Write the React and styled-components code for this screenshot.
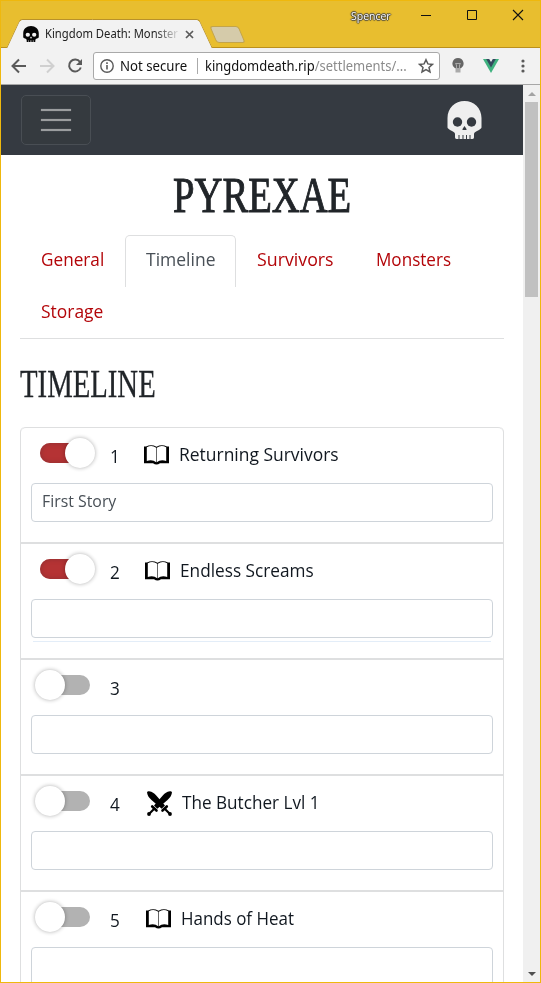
import React, { useLayoutEffect, useRef, useState } from "react";
import styled, { createGlobalStyle, css } from "styled-components";

const Global = createGlobalStyle`
  * { box-sizing: border-box; }
  body { margin: 0; overflow: hidden; font-family: "Open Sans", "Noto Sans", sans-serif; }
  svg { display: block; flex: none; }
`;

/* ---------- text set to a fixed width ---------- */
const FitBox = styled.span`
  display: block;
  flex: none;
  width: ${(p) => p.$w}px;
  white-space: nowrap;
`;
const FitInner = styled.span`
  display: inline-block;
  transform-origin: 0 50%;
`;
function Fit({ w, children }) {
  const ref = useRef(null);
  const [scale, setScale] = useState(1);
  useLayoutEffect(() => {
    setScale(w / ref.current.offsetWidth);
  }, [w, children]);
  return (
    <FitBox $w={w}>
      <FitInner ref={ref} style={{ transform: `scaleX(${scale})` }}>{children}</FitInner>
    </FitBox>
  );
}

/* ---------- window chrome ---------- */
const Window = styled.div`
  display: flex;
  flex-direction: column;
  width: 541px;
  height: 983px;
  overflow: hidden;
  border: 1px solid #efb80d;
  background: #fff;
`;
const TitleBar = styled.header`
  display: flex;
  flex: none;
  height: 47px;
  padding-left: 12px;
  background: #e8be2f;
  border-bottom: 1px solid #bb901c;
`;
const BrowserTab = styled.div`
  position: relative;
  display: flex;
  align-items: center;
  width: 193px;
  height: 29px;
  margin-top: 18px;
  padding: 0 0 0 10px;
  font-family: "Noto Sans", sans-serif;
  font-size: 12px;
  color: #222;
  > * { z-index: 1; }
  &::before, &::after {
    content: "";
    position: absolute;
    top: 0;
    bottom: 0;
    width: 55%;
    background: #f2f2f2;
    border-top: 1px solid #b8912a;
    z-index: 0;
  }
  &::before { left: 0; transform: skewX(-25deg); border-left: 1px solid #b8912a; border-top-left-radius: 3px; }
  &::after { right: 0; transform: skewX(25deg); border-right: 1px solid #b8912a; border-top-right-radius: 3px; }
`;
const TabTitle = styled.div`
  width: 134px;
  margin-left: 6px;
  mask-image: linear-gradient(90deg, #000 110px, transparent 136px);
`;
const NewTab = styled.div`
  width: 29px;
  height: 17px;
  margin: 25px 0 0 7px;
  transform: skewX(23deg);
  background: #d5cbaa;
  border: 1px solid #c3a44b;
  border-radius: 3px;
`;
const Account = styled.div`
  margin: 7px 0 0 109px;
  font-size: 11px;
  line-height: 16px;
  color: #fff;
  text-shadow: 0 0 1px #333, 1px 0 1px #444, -1px 0 1px #444, 0 1px 1px #444, 0 -1px 1px #444;
`;
const WindowButtons = styled.div`
  display: flex;
  gap: 34px;
  margin: 8px 0 0 29px;
`;
const Toolbar = styled.div`
  display: flex;
  align-items: center;
  flex: none;
  height: 37px;
  padding: 0 0 1px 10px;
  background: #f2f2f2;
  border-bottom: 1px solid #a7a7a7;
`;
const AddressBar = styled.div`
  display: flex;
  align-items: center;
  width: 347px;
  height: 28px;
  margin-left: 10px;
  padding-left: 6px;
  background: #fff;
  border: 1px solid #a9a9a9;
  border-radius: 3px;
  font-family: "Noto Sans", sans-serif;
  font-size: 14px;
  color: #111;
`;
const Secure = styled.div`
  margin: 0 10px 0 6px;
`;
const Url = styled.div`
  padding-left: 7px;
  margin-right: 11px;
  border-left: 1px solid #aaa;
  line-height: 16px;
  height: 16px;
`;
const UrlPath = styled.span`
  color: #8b8b8b;
`;
const ToolIcons = styled.div`
  display: flex;
  align-items: center;
  gap: ${(p) => p.$gap}px;
  margin-left: ${(p) => p.$left || 0}px;
`;

/* ---------- page ---------- */
const Viewport = styled.div`
  display: flex;
  flex: 1;
  min-height: 0;
`;
const Page = styled.main`
  width: 522px;
  overflow: hidden;
`;
const Navbar = styled.nav`
  display: flex;
  justify-content: space-between;
  align-items: center;
  height: 70px;
  padding: 0 41px 0 20px;
  background: #353a41;
`;
const Toggler = styled.button`
  display: flex;
  flex-direction: column;
  justify-content: center;
  align-items: center;
  gap: 8px;
  width: 70px;
  height: 50px;
  padding: 0;
  background: #353a3f;
  border: 1px solid #494e54;
  border-radius: 5px;
`;
const Bar = styled.i`
  width: 30px;
  height: 2px;
  background: #9b9d9f;
  box-shadow: 0 0 1px #9b9d9f;
`;
const Content = styled.div`
  padding: 0 19px;
`;
const heading = css`
  margin: 0;
  font-family: "Liberation Serif", serif;
  font-weight: 400;
  color: #212529;
`;
const Title = styled.h1`
  ${heading}
  display: flex;
  justify-content: center;
  height: 80px;
  font-size: 51px;
  line-height: 80px;
  -webkit-text-stroke: 1px #212529;
`;
const Section = styled.h2`
  ${heading}
  height: 88px;
  font-size: 41px;
  line-height: 89px;
  -webkit-text-stroke: 0.3px #212529;
`;
const Tabs = styled.div`
  display: flex;
  flex-wrap: wrap;
  height: 104px;
  border-bottom: 1px solid #dedfe0;
`;
const Tab = styled.div`
  height: 52px;
  padding: 0 20px;
  font-size: 18px;
  line-height: 47px;
  color: #b30509;
  border: 1px solid transparent;
  border-bottom: 0;
  border-radius: 5px 5px 0 0;
  ${(p) => p.$active && css`
    color: #495057;
    border-color: #dedfe0;
  `}
`;
const List = styled.div`
  border: solid #dedfe0;
  border-width: 0 1px;
  border-radius: 5px 5px 0 0;
`;
const Item = styled.section`
  height: 116px;
  padding: 0 10px;
  border: solid #dedfe0;
  border-width: 1px 0;
  &:first-child { border-radius: 5px 5px 0 0; }
`;
const Head = styled.div`
  display: flex;
  align-items: center;
  height: 55px;
  padding: 0 0 3px 4px;
  font-size: 18px;
  line-height: 52px;
  color: #111820;
`;
const Switch = styled.div`
  display: flex;
  align-items: center;
  justify-content: ${(p) => (p.$on ? "flex-end" : "flex-start")};
  width: 50px;
  height: 20px;
  margin: 0 20px 2px 5px;
  border-radius: 10px;
  background: ${(p) => (p.$on ? "#b53334" : "#b2b2b2")};
  box-shadow: ${(p) => (p.$on ? "inset 0 0 5px #8c3032" : "none")};
`;
const Knob = styled.div`
  flex: none;
  width: 30px;
  height: 30px;
  margin: 0 -5px;
  border-radius: 50%;
  background: #fff;
  box-shadow: 0 0 4px rgba(0, 0, 0, 0.32);
`;
const Year = styled.div`
  width: ${(p) => p.$w}px;
  padding-top: 4px;
`;
const IconSlot = styled.div`
  width: 25px;
  margin-right: ${(p) => p.$gap}px;
  padding-top: 2px;
`;
const Note = styled.div`
  height: 39px;
  padding-left: 10px;
  border: 1px solid #ced4da;
  border-radius: 4px;
  font-size: 16.5px;
  line-height: 34px;
  color: #495057;
`;
const NoteShade = styled.div`
  height: 1px;
  margin: 3px 2px 0;
  background: #e3edf8;
`;

/* ---------- scrollbar ---------- */
const Scrollbar = styled.div`
  display: flex;
  flex-direction: column;
  align-items: center;
  width: 17px;
  padding: 7px 0 6px;
  background: #f0f0f0;
`;
const Thumb = styled.div`
  width: 13px;
  height: 195px;
  margin: 6px 0 auto;
  background: #c1c1c1;
`;

/* ---------- icons ---------- */
const Skull = ({ w, h, fill, hole }) => (
  <svg width={w} height={h} viewBox="0 0 35 38" preserveAspectRatio="none">
    <path fill={fill} d="M17.500 0C27 0 34.500 7 34.500 17v9.500c0 1-2 2-4 3.300-2 1.200-3.500 2-3.500 3.200v3c0 1.300-.5 2-1.500 2h-16C8.500 38 8 37.300 8 36v-3c0-1.200-1.500-2-3.500-3.200-2-1.300-4-2.300-4-3.300V17C.5 7 8 0 17.500 0z" />
    <g fill={hole}>
      <circle cx="10.500" cy="21" r="4.700" />
      <circle cx="24.500" cy="21" r="4.700" />
      <path d="M17.500 25l2 3v1h-4v-1zM11.500 34h1v4h-1zM15.500 34h1v4h-1zM19 34h1v4h-1zM22.500 34h1v4h-1z" />
    </g>
  </svg>
);
const Book = () => (
  <svg width="25" height="20" viewBox="0 0 25 20">
    <path fillRule="evenodd" d="M0 1.500H2Q7.500-1 12.500 1.800Q17.500-1 23 1.500H25V18.200H16Q12.500 21 9 18.200H0zM2.800 2.200V16Q8.500 14.300 12.200 17.200V2.800Q8-.3 2.800 2.200zM22.200 2.200Q17-.3 12.800 2.800V17.200Q16.500 14.300 22.200 16z" />
  </svg>
);
const Sword = () => (
  <g>
    <path d="M0 1.500Q.5 0 2 .3C5.500 1 7 2 9 4.200L18 14.500l-3.300 3.200L4.500 9C2 6.500.6 5 0 1.500z" />
    <path d="M15.500 19.500L19.800 15.500" stroke="#000" strokeWidth="2.600" strokeLinecap="round" />
    <path d="M17 17l6 6" stroke="#000" strokeWidth="2.200" />
    <circle cx="23" cy="23" r="1.900" />
  </g>
);
const Swords = () => (
  <svg width="25" height="25" viewBox="0 0 25 25">
    <Sword />
    <g transform="translate(25 0) scale(-1 1)"><Sword /></g>
  </svg>
);
const Line = ({ w = 16, h = 16, d, color = "#5a5a5a", sw = 2 }) => (
  <svg width={w} height={h} viewBox={`0 0 ${w} ${h}`} fill="none" stroke={color} strokeWidth={sw}>
    <path d={d} />
  </svg>
);
const CloseTab = styled.div`
  margin: 1px 0 0 6px;
`;
const MenuDots = styled.svg`
  margin-left: 3px;
  fill: #5a5a5a;
`;

const tabs = [["General", 63], ["Timeline", 69], ["Survivors", 77], ["Monsters", 75], ["Storage", 62]];
const years = [
  { n: 1, on: true, yw: 34, icon: "book", gap: 9.5, name: "Returning Survivors", w: 160, note: "First Story" },
  { n: 2, on: true, yw: 35, icon: "book", gap: 10, name: "Endless Screams", w: 134, shade: true },
  { n: 3, yw: 36 },
  { n: 4, yw: 37, icon: "swords", gap: 10, name: "The Butcher Lvl 1", w: 138 },
  { n: 5, yw: 36, icon: "book", gap: 9.5, name: "Hands of Heat", w: 113 },
];

export default function App() {
  return (
    <Window>
      <Global />
      <TitleBar>
        <BrowserTab>
          <Skull w={16} h={16} fill="#050505" hole="#f2f2f2" />
          <TabTitle><Fit w={133}>Kingdom Death: Monster</Fit></TabTitle>
          <CloseTab><Line w={9} h={9} d="M1 1l7 7M8 1l-7 7" sw={1.7} /></CloseTab>
        </BrowserTab>
        <NewTab />
        <Account><Fit w={40}>Spencer</Fit></Account>
        <WindowButtons>
          <Line w={12} h={12} d="M1 6.500h10" color="#111" sw={1} />
          <Line w={12} h={12} d="M1.500 1.500h9v9h-9z" color="#111" sw={1} />
          <Line w={12} h={12} d="M1 1l10 10M11 1L1 11" color="#111" sw={1.1} />
        </WindowButtons>
      </TitleBar>
      <Toolbar>
        <ToolIcons $gap={12}>
          <Line d="M15 8H2M8 1.500L1.500 8L8 14.500" />
          <Line d="M1 8h13M8 1.500L14.500 8L8 14.500" color="#d0d0d0" />
          <svg width="16" height="16" viewBox="0 0 16 16" fill="none" stroke="#5a5a5a" strokeWidth="2">
            <path d="M13 4A6 6 0 1 0 13.800 9.500" />
            <path d="M15 1v6H9z" fill="#5a5a5a" stroke="none" />
          </svg>
        </ToolIcons>
        <AddressBar>
          <svg width="14" height="14" viewBox="0 0 14 14" fill="none" stroke="#5a5a5a" strokeWidth="1.400">
            <circle cx="7" cy="7" r="6.200" />
            <path d="M7 6v4.500M7 3.300v1.600" strokeWidth="1.600" />
          </svg>
          <Secure><Fit w={67}>Not secure</Fit></Secure>
          <Url><Fit w={202}>kingdomdeath.rip<UrlPath>/settlements/...</UrlPath></Fit></Url>
          <Line d="M8 1.700l1.900 4.200 4.500.5-3.400 3 1 4.500L8 11.600l-4 2.300 1-4.500-3.400-3 4.500-.5z" sw={1.5} />
        </AddressBar>
        <ToolIcons $gap={19} $left={12}>
          <svg width="12" height="15" viewBox="0 0 12 15">
            <path fill="#666" d="M6 0a5.600 5.600 0 0 1 3 10.300H3A5.600 5.600 0 0 1 6 0z" />
            <path d="M4.500 10V7L3.500 5.500h5L7.500 7v3" fill="none" stroke="#aaa" />
            <path fill="#aaa" d="M3.500 10h5v4.500h-5z" />
          </svg>
          <svg width="16" height="14" viewBox="0 0 16 14">
            <path fill="#3fb27f" d="M0 0h16L8 14z" />
            <path fill="#34495e" d="M3.200 0h9.600L8 8.500z" />
            <path fill="#f2f2f2" d="M6.200 0h3.600L8 3z" />
          </svg>
          <MenuDots width="4" height="14" viewBox="0 0 4 14">
            <circle cx="2" cy="2" r="1.600" /><circle cx="2" cy="7" r="1.600" /><circle cx="2" cy="12" r="1.600" />
          </MenuDots>
        </ToolIcons>
      </Toolbar>
      <Viewport>
        <Page>
          <Navbar>
            <Toggler><Bar /><Bar /><Bar /></Toggler>
            <Skull w={35} h={38} fill="#efefef" hole="#353a41" />
          </Navbar>
          <Content>
            <Title><Fit w={178}>PYREXAE</Fit></Title>
            <Tabs>
              {tabs.map(([t, w]) => (
                <Tab key={t} $active={t === "Timeline"}><Fit w={w}>{t}</Fit></Tab>
              ))}
            </Tabs>
            <Section><Fit w={136}>TIMELINE</Fit></Section>
            <List>
              {years.map((y) => (
                <Item key={y.n}>
                  <Head>
                    <Switch $on={y.on}><Knob /></Switch>
                    <Year $w={y.yw}><Fit w={9.5}>{y.n}</Fit></Year>
                    {y.icon && <IconSlot $gap={y.gap}>{y.icon === "book" ? <Book /> : <Swords />}</IconSlot>}
                    {y.name && <Fit w={y.w}>{y.name}</Fit>}
                  </Head>
                  <Note>{y.note && <Fit w={74}>{y.note}</Fit>}</Note>
                  {y.shade && <NoteShade />}
                </Item>
              ))}
            </List>
          </Content>
        </Page>
        <Scrollbar>
          <svg width="8" height="4" viewBox="0 0 8 4"><path fill="#a3a3a3" d="M4 0l4 4H0z" /></svg>
          <Thumb />
          <svg width="8" height="4" viewBox="0 0 8 4"><path fill="#505050" d="M4 4l4-4H0z" /></svg>
        </Scrollbar>
      </Viewport>
    </Window>
  );
}
